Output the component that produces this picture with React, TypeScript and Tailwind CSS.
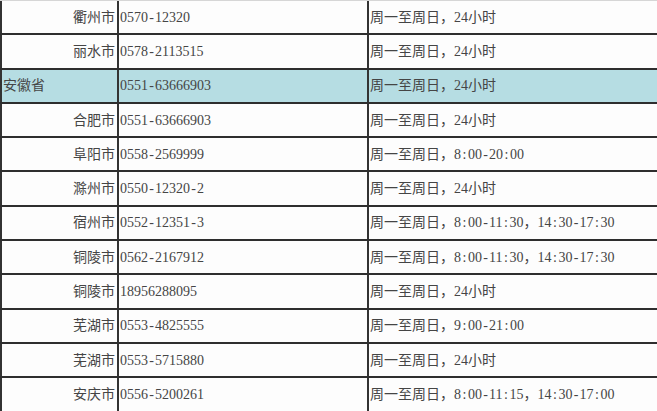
const rows: { city: string; phone: string; hours: string; province?: boolean }[] = [
  { city: '衢州市', phone: '0570-12320', hours: '周一至周日，24小时' },
  { city: '丽水市', phone: '0578-2113515', hours: '周一至周日，24小时' },
  { city: '安徽省', phone: '0551-63666903', hours: '周一至周日，24小时', province: true },
  { city: '合肥市', phone: '0551-63666903', hours: '周一至周日，24小时' },
  { city: '阜阳市', phone: '0558-2569999', hours: '周一至周日，8:00-20:00' },
  { city: '滁州市', phone: '0550-12320-2', hours: '周一至周日，24小时' },
  { city: '宿州市', phone: '0552-12351-3', hours: '周一至周日，8:00-11:30，14:30-17:30' },
  { city: '铜陵市', phone: '0562-2167912', hours: '周一至周日，8:00-11:30，14:30-17:30' },
  { city: '铜陵市', phone: '18956288095', hours: '周一至周日，24小时' },
  { city: '芜湖市', phone: '0553-4825555', hours: '周一至周日，9:00-21:00' },
  { city: '芜湖市', phone: '0553-5715880', hours: '周一至周日，24小时' },
  { city: '安庆市', phone: '0556-5200261', hours: '周一至周日，8:00-11:15，14:30-17:00' },
];

// half-width punctuation in the source font is as wide as a digit
function Cells({ text }: { text: string }) {
  return (
    <>
      {text.split(/([-:])/).map((part, i) =>
        part === '-' || part === ':' ? (
          <span key={i} className="inline-block w-[7px] text-center">
            {part}
          </span>
        ) : (
          <span key={i}>{part}</span>
        ),
      )}
    </>
  );
}

export default function App() {
  return (
    <div
      className="w-[657px] h-[411px] overflow-hidden bg-[#fdfdfd] border-t border-[#d6d6d6] text-[14px] text-[#454545]"
      style={{ fontFamily: '"Liberation Serif", "Noto Sans CJK SC", serif' }}
    >
      {rows.map((r, i) => {
        const last = i === rows.length - 1;
        return (
          <div
            key={i}
            className={`grid grid-cols-[119px_250px_1fr] h-[34.3px] border-b-2 ${
              last ? 'border-[#d0d0d0]' : 'border-[#2e2e2e]'
            } ${r.province ? 'bg-[#b6dde3]' : ''}`}
          >
            <div
              className={`flex items-center border-l-2 border-r-2 border-[#333] ${
                r.province ? 'justify-start pl-[1px]' : 'justify-end pr-[2px]'
              }`}
            >
              {r.city}
            </div>
            <div className="flex items-center border-r-2 border-[#333] pl-[1px] whitespace-nowrap">
              <Cells text={r.phone} />
            </div>
            <div className="flex items-center pl-[1px] whitespace-nowrap">
              <Cells text={r.hours} />
            </div>
          </div>
        );
      })}
    </div>
  );
}
